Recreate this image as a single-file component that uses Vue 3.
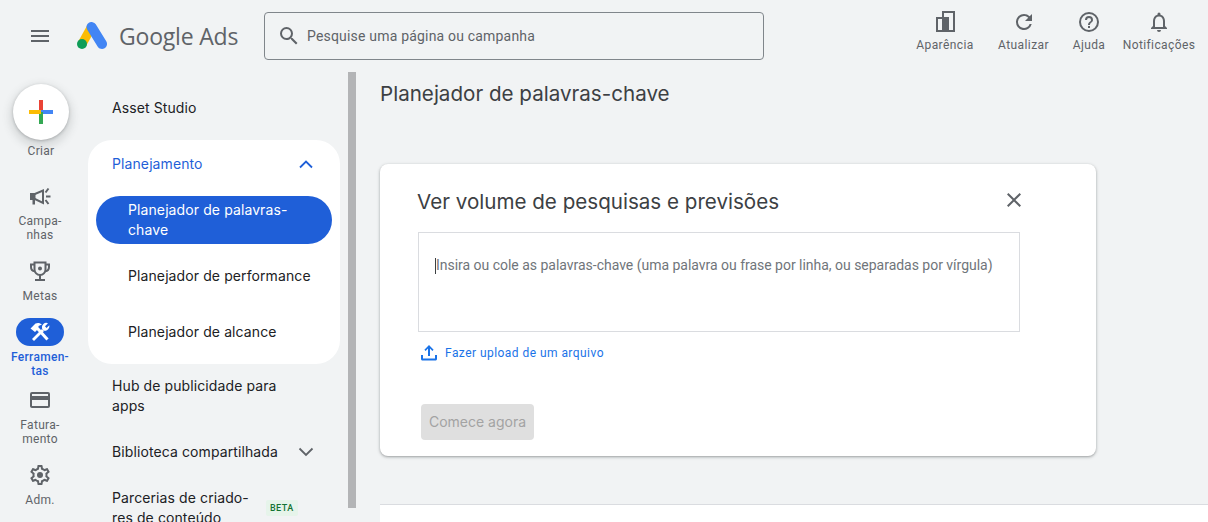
<template>
  <div class="page">
    <header class="topbar">
      <button class="menu-btn" aria-label="Menu">
        <svg width="24" height="24" viewBox="0 0 24 24"><path d="M3 18h18v-2H3v2zm0-5h18v-2H3v2zm0-7v2h18V6H3z" fill="#5f6368" /></svg>
      </button>
      <div class="logo">
        <svg width="32" height="28" viewBox="0 0 32 28">
          <line x1="14.500" y1="5" x2="5" y2="22" stroke="#fbbc04" stroke-width="9" />
          <line x1="14.500" y1="5" x2="25" y2="22" stroke="#4285f4" stroke-width="10" stroke-linecap="round" />
          <circle cx="5" cy="22" r="5" fill="#0f9d58" />
        </svg>
        <span class="logo-text">Google Ads</span>
      </div>
      <div class="search">
        <svg width="24" height="24" viewBox="0 0 24 24"><path d="M15.500 14h-.79l-.28-.27A6.470 6.470 0 0 0 16 9.500 6.500 6.500 0 1 0 9.500 16c1.610 0 3.090-.59 4.230-1.570l.27.28v.79l5 4.990L20.490 19l-4.990-5zm-6 0C7.010 14 5 11.990 5 9.500S7.010 5 9.500 5 14 7.010 14 9.500 11.990 14 9.500 14z" fill="#5f6368" /></svg>
        <span>Pesquise uma página ou campanha</span>
      </div>
      <nav class="top-actions">
        <div v-for="a in topActions" :key="a.label" class="top-action" :style="{ width: a.width + 'px' }">
          <svg width="24" height="24" viewBox="0 0 24 24" v-html="a.icon"></svg>
          <span>{{ a.label }}</span>
        </div>
      </nav>
    </header>

    <div class="content">
      <aside class="rail">
        <div class="create">
          <div class="create-btn">
            <svg width="24" height="24" viewBox="0 0 24 24">
              <rect x="10" y="0" width="4" height="12" fill="#ea4335" />
              <rect x="12" y="10" width="12" height="4" fill="#4285f4" />
              <rect x="10" y="12" width="4" height="12" fill="#34a853" />
              <rect x="0" y="10" width="12" height="4" fill="#fbbc04" />
            </svg>
          </div>
          <span>Criar</span>
        </div>
        <div v-for="r in railItems" :key="r.label" class="rail-item" :class="[r.cls, { active: r.active }]">
          <div class="rail-icon">
            <svg width="24" height="24" viewBox="0 0 24 24" v-html="r.icon"></svg>
          </div>
          <span>{{ r.label }}</span>
        </div>
      </aside>

      <div class="nav-wrap">
        <nav class="side">
          <div class="side-item single">Asset Studio</div>
          <div class="group">
            <div class="group-head">
              <span>Planejamento</span>
              <svg width="24" height="24" viewBox="0 0 24 24"><path d="M6 15.500 12 9.500l6 6" fill="none" stroke="#1f5fd8" stroke-width="1.800" /></svg>
            </div>
            <div class="sub active">Planejador de palavras-<br />chave</div>
            <div class="sub first">Planejador de performance</div>
            <div class="sub">Planejador de alcance</div>
          </div>
          <div class="side-item hub">Hub de publicidade para apps</div>
          <div class="side-item lib">
            <span>Biblioteca compartilhada</span>
            <svg width="24" height="24" viewBox="0 0 24 24"><path d="M5.500 8.500 12 15l6.500-6.500" fill="none" stroke="#5f6368" stroke-width="1.800" /></svg>
          </div>
          <div class="side-item partner">
            <span>Parcerias de criado-<br />res de conteúdo</span>
            <em class="beta">BETA</em>
          </div>
        </nav>
        <div class="scroll"></div>
      </div>

      <main class="main">
        <h1>Planejador de palavras-chave</h1>
        <section class="card">
          <div class="card-head">
            <h2>Ver volume de pesquisas e previsões</h2>
            <svg class="close" width="24" height="24" viewBox="0 0 24 24"><path d="M19 6.410 17.590 5 12 10.590 6.410 5 5 6.410 10.590 12 5 17.590 6.410 19 12 13.410 17.590 19 19 17.590 13.410 12z" fill="#5f6368" /></svg>
          </div>
          <div class="keywords"><i class="caret"></i>Insira ou cole as palavras-chave (uma palavra ou frase por linha, ou separadas por vírgula)</div>
          <div class="upload">
            <svg width="20" height="20" viewBox="0 0 20 20"><path d="M9 13V5.500L6.600 7.900 5.400 6.700 10 2.100l4.600 4.600-1.200 1.200L11 5.500V13zM2 12h2v3.500h12V12h2v4c0 .9-.7 1.500-1.500 1.500h-13C2.700 17.500 2 16.900 2 16z" fill="#1a73e8" /></svg>
            <span>Fazer upload de um arquivo</span>
          </div>
          <button class="start" disabled>Comece agora</button>
        </section>
        <div class="bottom-panel"></div>
      </main>
    </div>
  </div>
</template>

<script setup>
const topActions = [
  { label: 'Aparência', width: 86, icon: '<path d="M10 18V2h11v19h-5" fill="none" stroke="#5f6368" stroke-width="2"/><path d="M4 8h11v13H4z" fill="none" stroke="#5f6368" stroke-width="2"/><path d="M9 7h7v15H9z" fill="#5f6368"/>' },
  { label: 'Atualizar', width: 71, icon: '<path d="M17.650 6.350A7.960 7.960 0 0 0 12 4a8 8 0 1 0 7.730 10h-2.080A6 6 0 1 1 12 6c1.660 0 3.140.69 4.220 1.780L13 11h7V4z" fill="#5f6368"/>' },
  { label: 'Ajuda', width: 60, icon: '<path d="M11 18h2v-2h-2zm1-16a10 10 0 1 0 0 20 10 10 0 0 0 0-20zm0 18a8 8 0 1 1 0-16 8 8 0 0 1 0 16zm0-14a4 4 0 0 0-4 4h2a2 2 0 1 1 4 0c0 2-3 1.750-3 5h2c0-2.250 3-2.500 3-5a4 4 0 0 0-4-4z" fill="#5f6368"/>' },
  { label: 'Notificações', width: 80, icon: '<path d="M12 22a2 2 0 0 0 2-2h-4a2 2 0 0 0 2 2zm6-6v-5c0-3.070-1.640-5.640-4.500-6.320V4a1.500 1.500 0 0 0-3 0v.68C7.630 5.360 6 7.920 6 11v5l-2 2v1h16v-1zm-2 1H8v-6c0-2.480 1.510-4.500 4-4.500s4 2.020 4 4.500z" fill="#5f6368"/>' }
]

const railItems = [
  { label: 'Campa-\nnhas', cls: 'campaigns', icon: '<path d="M3 10v5h4l8 4V6.500L7 10z" fill="none" stroke="#5f6368" stroke-width="2"/><path d="M4 10h3.500v5H4zM4.500 15h2.500v5.500H4.500z" fill="#5f6368"/><path d="M17.500 8.500 20.500 4.500M18 12.500h4.500M17.500 16 20.500 20" fill="none" stroke="#5f6368" stroke-width="2"/>' },
  { label: 'Metas', cls: 'goals', icon: '<path d="M6.500 3.500h11v7a5.500 5.500 0 0 1-11 0z" fill="none" stroke="#5f6368" stroke-width="2"/><path d="M6.500 5.500H3v2.500c0 2.200 1.500 4 3.800 4.300M17.500 5.500H21v2.500c0 2.200-1.500 4-3.800 4.300M12 16v4M7 21h10" fill="none" stroke="#5f6368" stroke-width="2"/><circle cx="12" cy="9.500" r="2" fill="#5f6368"/>' },
  { label: 'Ferramen-\ntas', cls: 'tools', active: true, icon: '<path d="M5 20 15 10" stroke="#fff" stroke-width="2.800" fill="none"/><path d="M9.500 8.500 19.500 19.500" stroke="#fff" stroke-width="3" fill="none"/><path d="M2.500 8.500 7.500 3.500C10 2.500 12 3 14 4.500L10.500 6v2.500L7 12z" fill="#fff"/><path d="M14 8.500A4.500 4.500 0 0 1 20 3.200L17 6.200l1.500 1.800 2.800-2.700A4.500 4.500 0 0 1 15.500 10.500z" fill="#fff"/>' },
  { label: 'Fatura-\nmento', cls: 'billing', icon: '<path d="M20 4H4a2 2 0 0 0-2 2v12c0 1.100.9 2 2 2h16a2 2 0 0 0 2-2V6a2 2 0 0 0-2-2zm0 14H4v-6h16zm0-10H4V6h16z" fill="#5f6368"/>' },
  { label: 'Adm.', cls: 'admin', icon: '<path d="M19.430 12.980c.04-.32.07-.64.07-.98s-.03-.66-.07-.98l2.110-1.650c.19-.15.24-.42.12-.64l-2-3.460c-.12-.22-.39-.3-.61-.22l-2.490 1c-.52-.4-1.080-.73-1.690-.98l-.38-2.650A.49.49 0 0 0 14 2h-4c-.25 0-.46.18-.49.420l-.38 2.650c-.61.25-1.170.59-1.690.98l-2.490-1a.5.5 0 0 0-.61.220l-2 3.460c-.13.22-.07.49.12.64l2.110 1.650c-.04.32-.07.65-.07.98s.03.66.07.98l-2.110 1.650c-.19.15-.24.42-.12.64l2 3.460c.12.22.39.3.61.22l2.490-1c.52.4 1.080.73 1.690.98l.38 2.650c.03.24.24.42.49.42h4c.25 0 .46-.18.49-.42l.38-2.650c.61-.25 1.170-.59 1.690-.98l2.490 1c.23.09.49 0 .61-.22l2-3.460c.12-.22.07-.49-.12-.64zM17.450 11.270c.04.31.05.52.05.73s-.02.43-.05.73l-.14 1.130.89.7 1.080.84-.7 1.210-1.270-.51-1.040-.42-.9.68c-.43.32-.84.56-1.250.73l-1.060.43-.16 1.130-.2 1.350h-1.400l-.19-1.350-.16-1.130-1.060-.43c-.43-.18-.83-.41-1.230-.71l-.91-.7-1.060.43-1.270.51-.7-1.210 1.080-.84.89-.7-.14-1.130c-.03-.31-.05-.54-.05-.74s.02-.43.05-.73l.14-1.130-.89-.7-1.080-.84.7-1.210 1.270.51 1.040.42.9-.68c.43-.32.84-.56 1.250-.73l1.060-.43.16-1.130.2-1.350h1.390l.19 1.350.16 1.130 1.060.43c.43.18.83.41 1.230.71l.91.7 1.060-.43 1.270-.51.7 1.210-1.070.85-.89.7z" fill="#5f6368"/><circle cx="12" cy="12" r="3" fill="#5f6368"/>' }
]
</script>

<style>
html, body { margin: 0; background: #f1f3f4; overflow: hidden; }
</style>

<style scoped>
* { box-sizing: border-box; }
.page {
  width: 1208px;
  height: 522px;
  overflow: hidden;
  background: #f1f3f4;
  font-family: Inter, "Noto Sans", sans-serif;
  color: #202124;
  display: flex;
  flex-direction: column;
}
.topbar {
  height: 72px;
  flex-shrink: 0;
  display: flex;
  align-items: flex-start;
}
.menu-btn {
  margin: 24px 0 0 28px;
  padding: 0;
  width: 24px;
  height: 24px;
  border: none;
  background: none;
}
.logo {
  margin: 21px 0 0 25px;
  width: 187px;
  display: flex;
  align-items: center;
  gap: 10px;
}
.logo-text {
  font-family: "Open Sans", sans-serif;
  font-size: 23px;
  letter-spacing: -0.2px;
  color: #5f6368;
  line-height: 30px;
}
.search {
  margin-top: 12px;
  width: 500px;
  height: 48px;
  border: 1px solid #80868b;
  border-radius: 4px;
  display: flex;
  align-items: center;
  gap: 6px;
  padding-left: 12px;
  font-family: Roboto, sans-serif;
  font-size: 14px;
  letter-spacing: 0.19px;
  color: #5f6368;
}
.top-actions {
  margin-left: auto;
  margin-right: 9px;
  display: flex;
  padding-top: 10px;
}
.top-action {
  display: flex;
  flex-direction: column;
  align-items: center;
  gap: 4px;
  font-family: Roboto, sans-serif;
  font-size: 12px;
  letter-spacing: 0.4px;
  line-height: 14px;
  color: #5f6368;
  white-space: nowrap;
}
.content {
  flex: 1;
  min-height: 0;
  display: flex;
}
.rail {
  width: 80px;
  flex-shrink: 0;
  font-family: Roboto, sans-serif;
  font-size: 12px;
  letter-spacing: 0.3px;
  line-height: 14px;
  color: #5f6368;
  text-align: center;
  padding-top: 12px;
}
.create {
  display: flex;
  flex-direction: column;
  align-items: center;
  gap: 4px;
  height: 80px;
  margin-left: 2px;
  margin-bottom: 18px;
}
.create-btn {
  width: 56px;
  height: 56px;
  border-radius: 50%;
  background: #fff;
  box-shadow: 0 1px 3px rgba(60, 64, 67, .3), 0 4px 8px 3px rgba(60, 64, 67, .15);
  display: flex;
  align-items: center;
  justify-content: center;
}
.rail-item {
  display: flex;
  flex-direction: column;
  align-items: center;
  white-space: pre-line;
}
.rail-icon {
  width: 48px;
  height: 28px;
  border-radius: 14px;
  display: flex;
  align-items: center;
  justify-content: center;
}
.rail-item span { margin-top: 4px; }
.campaigns { height: 75px; }
.goals { height: 61px; }
.tools { height: 68px; }
.billing { height: 75px; }
.rail-item.active .rail-icon { background: #1f5fd8; }
.rail-item.active span { color: #1f5fd8; font-weight: 500; }
.nav-wrap {
  position: relative;
  width: 300px;
  flex-shrink: 0;
  margin-left: 8px;
  margin-right: -8px;
  display: flex;
}
.side {
  width: 252px;
  font-size: 14px;
  line-height: 20px;
  letter-spacing: .1px;
  color: #202124;
}
.side-item { padding: 0 24px; }
.single {
  height: 68px;
  display: flex;
  align-items: center;
  padding-top: 4px;
}
.group {
  background: #fff;
  border-radius: 24px;
  height: 224px;
}
.group-head {
  height: 48px;
  padding: 0 22px 0 24px;
  margin-bottom: 8px;
  display: flex;
  align-items: center;
  justify-content: space-between;
  color: #1f5fd8;
}
.sub {
  margin: 0 8px;
  height: 56px;
  padding: 0 0 0 32px;
  display: flex;
  align-items: center;
}
.sub.active {
  height: 48px;
  background: #1f5fd8;
  color: #fff;
  border-radius: 24px;
}
.sub.first { margin-top: 4px; }
.hub { padding-top: 12px; padding-right: 48px; height: 68px; }
.lib {
  height: 40px;
  display: flex;
  align-items: center;
  justify-content: space-between;
  padding-right: 22px;
}
.partner {
  margin-top: 16px;
  display: flex;
  align-items: center;
  padding-right: 0;
}
.beta {
  margin-left: 17px;
  padding: 0 4px;
  background: #e6f4ea;
  border-radius: 2px;
  color: #137333;
  font-family: Roboto, sans-serif;
  font-style: normal;
  font-size: 9px;
  font-weight: 500;
  letter-spacing: .5px;
  line-height: 16px;
}
.scroll {
  position: absolute;
  left: 260px;
  top: 0;
  width: 8px;
  height: 436px;
  background: #b3b4b6;
}
.main {
  flex: 1;
  min-width: 0;
}
h1 {
  margin: 8px 0 0;
  font-size: 20.600px;
  line-height: 28px;
  font-weight: 400;
  color: #3c4043;
}
.card {
  margin-top: 56px;
  width: 716px;
  height: 292px;
  background: #fff;
  border-radius: 8px;
  box-shadow: 0 1px 2px rgba(60, 64, 67, .3), 0 1px 3px 1px rgba(60, 64, 67, .15);
  padding: 25px 38px 0;
}
.card-head {
  display: flex;
  align-items: center;
  justify-content: space-between;
  width: 609px;
  height: 26px;
  margin-left: -1px;
}
.close { margin-top: -4px; }
h2 {
  margin: 0;
  font-size: 20.600px;
  line-height: 26px;
  font-weight: 400;
  color: #3c4043;
}
.keywords {
  margin-top: 17px;
  width: 602px;
  height: 100px;
  border: 1px solid #dadce0;
  padding: 22px 16px;
  font-family: Roboto, sans-serif;
  font-size: 14px;
  line-height: 20px;
  letter-spacing: -.02px;
  color: #70757a;
  display: flex;
}
.caret {
  width: 1px;
  height: 16px;
  margin-top: 3px;
  background: #3c4043;
}
.upload {
  margin-top: 11px;
  margin-left: 1px;
  display: flex;
  align-items: center;
  gap: 6px;
  font-family: Roboto, sans-serif;
  font-size: 12px;
  letter-spacing: .45px;
  line-height: 20px;
  color: #1a73e8;
}
.start {
  display: block;
  margin-top: 41px;
  margin-left: 3px;
  width: 113px;
  height: 36px;
  padding: 0 0 2px;
  border: none;
  border-radius: 4px;
  background: #dfdfdf;
  color: #a3a3a3;
  font-family: Inter, sans-serif;
  font-size: 14px;
  font-weight: 400;
}
.bottom-panel {
  margin-top: 48px;
  height: 30px;
  background: #fff;
  border-top: 1px solid #dadce0;
}
</style>
